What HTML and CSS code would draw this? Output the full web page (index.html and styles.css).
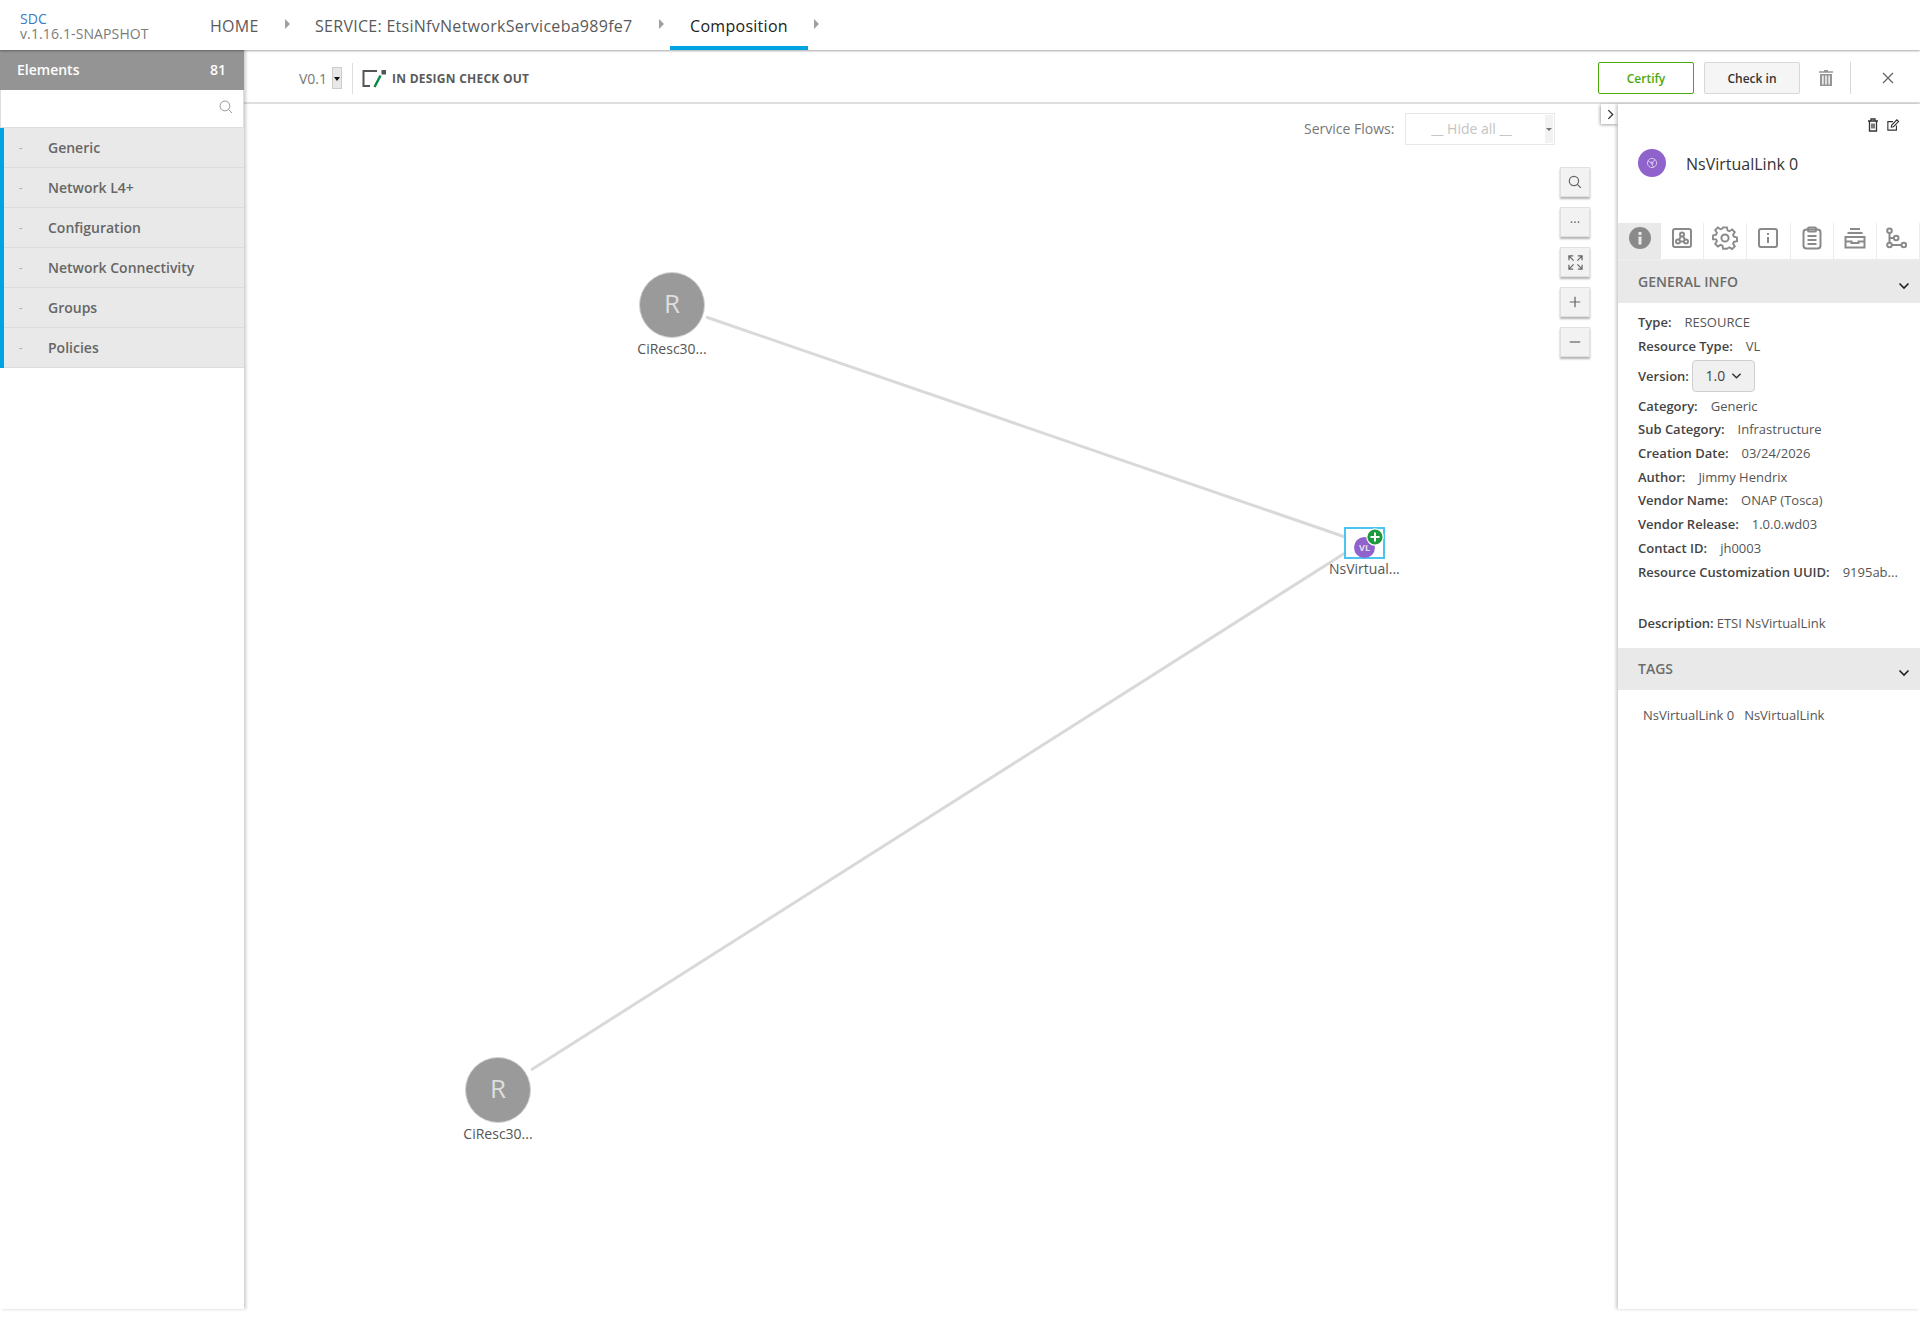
FILE: index.html
```html
<!DOCTYPE html>
<html lang="en">
<head>
<meta charset="utf-8">
<title>SDC Composition</title>
<link rel="stylesheet" href="styles.css">
</head>
<body>
<header class="topbar">
  <div class="brand">
    <div class="brand-name">SDC</div>
    <div class="brand-version">v.1.16.1-SNAPSHOT</div>
  </div>
  <nav class="crumbs">
    <a class="crumb crumb-home">HOME</a><i class="crumb-arrow"></i>
    <a class="crumb crumb-service">SERVICE: EtsiNfvNetworkServiceba989fe7</a><i class="crumb-arrow"></i>
    <a class="crumb crumb-active">Composition</a><i class="crumb-arrow"></i>
  </nav>
</header>
<main class="main">
  <aside class="palette">
    <div class="palette-head"><span>Elements</span><span>81</span></div>
    <div class="palette-search">
      <svg class="search-icon" viewBox="0 0 16 16"><circle cx="6.8" cy="6.8" r="5.6"/><path d="M10.8 10.8l4.2 4.2"/></svg>
    </div>
    <ul class="palette-list">
      <li><i>-</i>Generic</li>
      <li><i>-</i>Network L4+</li>
      <li><i>-</i>Configuration</li>
      <li><i>-</i>Network Connectivity</li>
      <li><i>-</i>Groups</li>
      <li><i>-</i>Policies</li>
    </ul>
  </aside>
  <section class="workspace">
    <div class="toolbar">
      <span class="ver">V0.1</span>
      <span class="ver-arrow"></span>
      <span class="tool-divider"></span>
      <svg class="state-icon" viewBox="0 0 24 17"><path class="state-box" d="M15 1H1.500v15H8"/><rect class="state-dot" x="19.500" y="0" width="4.500" height="4.500"/><path class="state-pen" d="M18.500 5.500L12.500 17"/></svg>
      <span class="state-text">IN DESIGN CHECK OUT</span>
      <span class="tool-fill"></span>
      <button class="btn btn-certify">Certify</button>
      <button class="btn btn-checkin">Check in</button>
      <svg class="tool-trash" viewBox="0 0 14 16"><path d="M5 0h4v1.200h5v1.600H0V1.200h5z"/><path d="M1 4h12v12H1zM3.200 5.500v9h1.400v-9zM6.300 5.500v9h1.400v-9zM9.400 5.500v9h1.400v-9z" fill-rule="evenodd"/></svg>
      <span class="tool-divider-2"></span>
      <svg class="tool-close" viewBox="0 0 12 12"><path d="M1 1l10 10M11 1L1 11"/></svg>
    </div>
    <div class="stage">
      <div class="canvas">
        <svg class="links" viewBox="0 1 1374 1205">
          <path d="M462 214L1101 434"/>
          <path d="M287 967L1101 450"/>
        </svg>
        <div class="node node-a"><div class="disc">R</div><div class="node-label">CiResc30...</div></div>
        <div class="node node-b"><div class="disc">R</div><div class="node-label">CiResc30...</div></div>
        <div class="vl">
          <div class="vl-box"><span class="vl-disc">VL</span></div>
          <svg class="vl-plus" viewBox="0 0 18 18"><circle cx="9" cy="9" r="8.200"/><path d="M9 4.500v9M4.500 9h9"/></svg>
          <div class="vl-label">NsVirtual...</div>
        </div>
        <div class="flows">
          <label class="flows-label">Service Flows:</label>
          <div class="flows-select"><span class="flows-value">__ Hide all __</span><span class="flows-arrow"></span></div>
        </div>
        <div class="zoomers">
          <div class="zoomer"><svg viewBox="0 0 16 16" class="z-line"><circle cx="6.800" cy="6.800" r="5.300"/><path d="M10.700 10.700l4 4"/></svg></div>
          <div class="zoomer"><svg viewBox="0 0 16 16" class="z-fill"><circle cx="4" cy="8" r="1"/><circle cx="8" cy="8" r="1"/><circle cx="12" cy="8" r="1"/></svg></div>
          <div class="zoomer"><svg viewBox="0 0 16 16" class="z-line z-large"><path d="M1 5.500V1h4.500M1 1l5 5M10.500 1H15v4.500M15 1l-5 5M1 10.500V15h4.500M1 15l5-5M15 10.500V15h-4.500M15 15l-5-5"/></svg></div>
          <div class="zoomer"><svg viewBox="0 0 16 16" class="z-line"><path d="M8 2v12M2 8h12"/></svg></div>
          <div class="zoomer"><svg viewBox="0 0 16 16" class="z-line"><path d="M2 8h12"/></svg></div>
        </div>
        <button class="collapse"><svg viewBox="0 0 8 12"><path d="M1.500 1l5 5-5 5"/></svg></button>
      </div>
      <aside class="panel">
        <div class="panel-actions">
          <svg viewBox="0 0 12 14"><path d="M1 3h10M4 3V1h4v2M2.500 3v10h7V3M5 5.500v5M7 5.500v5"/></svg>
          <svg viewBox="0 0 14 14"><path d="M11 7.500V13H1V3h6M5 9.500l.5-2.500L11.500 1l2 2-6 6z"/></svg>
        </div>
        <div class="panel-title">
          <span class="title-disc"><svg viewBox="0 0 12 12"><circle cx="6" cy="6" r="4.600"/><circle cx="6" cy="6" r="1"/><path d="M2 4l3.500 1.800M9 2.500L6.500 5.500M6 7l1.500 3.500"/></svg></span>
          <span class="title-text">NsVirtualLink 0</span>
        </div>
        <div class="tabs">
          <div class="tab tab-active"><svg viewBox="0 0 24 24"><circle class="fill" cx="12" cy="12" r="11"/><rect class="cut" x="10.500" y="6" width="3" height="3"/><rect class="cut" x="10.500" y="10.500" width="3" height="8"/></svg></div>
          <div class="tab"><svg viewBox="0 0 24 24"><rect x="3" y="3" width="18" height="18" rx="2"/><circle cx="12" cy="8.500" r="2"/><circle cx="8" cy="15.500" r="2"/><circle cx="16" cy="15.500" r="2"/><path d="M11 10.300l-2 3.400M13 10.300l2 3.400M10 15.500h4"/></svg></div>
          <div class="tab"><svg viewBox="0 0 24 24"><circle cx="12" cy="12" r="3.600"/><path d="M10 1h4l.7 3.200 2 .9 2.800-1.800 2.800 2.800-1.800 2.800.9 2 3.200.7v4l-3.200.7-.9 2 1.800 2.800-2.800 2.800-2.800-1.800-2 .9L14 23.500h-4l-.7-3.200-2-.9-2.800 1.800-2.800-2.800 1.800-2.800-.9-2L-.6 13.500v-4l3.200-.7.900-2-1.800-2.800 2.800-2.800 2.800 1.800 2-.9z" transform="translate(.6 .4) scale(.95)"/></svg></div>
          <div class="tab"><svg viewBox="0 0 24 24"><rect x="3" y="3" width="18" height="18" rx="2"/><path d="M12 7v2M12 11v6"/></svg></div>
          <div class="tab"><svg viewBox="0 0 24 24"><rect x="3.500" y="3.500" width="17" height="19" rx="3"/><rect x="8" y="1.500" width="8" height="4" rx="1"/><path d="M7.500 10h9M7.500 14h9M7.500 18h9"/></svg></div>
          <div class="tab"><svg viewBox="0 0 24 24"><path d="M7 3h10M4.500 7h15M2.500 11h19v10.500h-19zM2.500 15.500h6v1.500h7v-1.500h6"/></svg></div>
          <div class="tab"><svg viewBox="0 0 24 24"><circle cx="3.500" cy="4.800" r="2.300"/><circle cx="3.500" cy="19" r="2.300"/><circle cx="10.200" cy="12" r="2.300"/><circle cx="17.800" cy="19" r="2.300"/><path d="M3.500 7.100v9.600M3.500 12h4.400M5.800 19h9.700"/></svg></div>
        </div>
        <div class="sect-head sect-general"><span>GENERAL INFO</span><svg viewBox="0 0 12 8"><path d="M1.500 1.500L6 6l4.500-4.500"/></svg></div>
        <div class="info">
          <div class="row r-type"><b>Type:</b><span>RESOURCE</span></div>
          <div class="row r-rtype"><b>Resource Type:</b><span>VL</span></div>
          <div class="row r-version"><b>Version:</b><button class="version-btn">1.0<svg viewBox="0 0 12 8"><path d="M1.500 1.500L6 6l4.500-4.500"/></svg></button></div>
          <div class="row r-cat"><b>Category:</b><span>Generic</span></div>
          <div class="row r-sub"><b>Sub Category:</b><span>Infrastructure</span></div>
          <div class="row r-date"><b>Creation Date:</b><span>03/24/2026</span></div>
          <div class="row r-author"><b>Author:</b><span>Jimmy Hendrix</span></div>
          <div class="row r-vname"><b>Vendor Name:</b><span>ONAP (Tosca)</span></div>
          <div class="row r-vrel"><b>Vendor Release:</b><span>1.0.0.wd03</span></div>
          <div class="row r-contact"><b>Contact ID:</b><span>jh0003</span></div>
          <div class="row r-uuid"><b>Resource Customization UUID:</b><span>9195ab...</span></div>
          <div class="row r-desc"><b>Description:</b><span class="desc">ETSI NsVirtualLink</span></div>
        </div>
        <div class="sect-head sect-tags"><span>TAGS</span><svg viewBox="0 0 12 8"><path d="M1.500 1.500L6 6l4.500-4.500"/></svg></div>
        <div class="tag-row"><span>NsVirtualLink 0</span><span>NsVirtualLink</span></div>
      </aside>
    </div>
  </section>
</main>
</body>
</html>
```
FILE: styles.css
```css
* { box-sizing: border-box; }
html, body { margin: 0; padding: 0; height: 1319px; background: #fff; overflow: hidden; }
body { font-family: "Open Sans", "Noto Sans", sans-serif; color: #5a5a5a; }
svg { display: block; overflow: visible; }
button { font-family: inherit; cursor: pointer; }

/* top bar */
.topbar { height: 50px; display: flex; background: #fff; position: relative; z-index: 3; box-shadow: 0 1px 2px rgba(0,0,0,.35); }
.brand { width: 210px; padding: 11px 0 0 20px; font-size: 14px; line-height: 15px; letter-spacing: .12px; }
.brand-name { color: #3a7cbf; }
.brand-version { color: #7b7b7b; }
.crumbs { display: flex; align-items: stretch; font-size: 16px; letter-spacing: .28px; }
.crumb { display: flex; align-items: center; padding-top: 2px; color: #5a5a5a; }
.crumb-home { width: 75px; }
.crumb-service { width: 344px; white-space: nowrap; }
.crumb-arrow { width: 0; height: 0; margin-top: 19px; border-left: 5px solid #a0a0a0; border-top: 5px solid transparent; border-bottom: 5px solid transparent; }
.crumb-home + .crumb-arrow { margin-right: 25px; }
.crumb-service + .crumb-arrow { margin-right: 6px; }
.crumb-active { width: 138px; justify-content: center; color: #222; border-bottom: 4px solid #00a4e0; padding-top: 6px; margin-right: 6px; }

/* layout */
.main { display: flex; height: 1259px; }
.palette { width: 244px; flex: none; position: relative; z-index: 2; background: #fff; box-shadow: 2px 0 3px rgba(0,0,0,.2); }
.workspace { flex: 1; display: flex; flex-direction: column; min-width: 0; }

/* palette */
.palette-head { height: 40px; background: #949494; color: #fff; display: flex; justify-content: space-between; align-items: center; padding: 0 18px 2px 17px; font-size: 14px; font-weight: 600; }
.palette-search { height: 38px; background: #fff; border: 1px solid #dedede; border-top: 0; display: flex; justify-content: flex-end; align-items: center; padding: 0 10px 4px 0; }
.search-icon { width: 14px; height: 14px; fill: none; stroke: #8b8b8b; stroke-width: 1; }
.palette-list { list-style: none; margin: 0; padding: 0; border-left: 4px solid #00a4e0; }
.palette-list li { height: 40px; background: #e9e9e9; border-bottom: 1px solid #dcdcdc; display: flex; align-items: center; font-size: 14px; font-weight: 600; color: #666; padding-bottom: 1px; }
.palette-list i { width: 44px; padding-left: 15px; font-style: normal; font-size: 10px; font-weight: 400; color: #999; }

/* toolbar */
.toolbar { height: 54px; flex: none; border-bottom: 2px solid #dedede; display: flex; align-items: center; padding: 4px 0 0 55px; background: #fff; }
.ver { font-size: 14px; color: #777; margin-right: 5px; }
.ver-arrow { width: 10px; height: 22px; margin-right: 10px; background: #e8e8e8; border: 1px solid #ccc; position: relative; }
.ver-arrow::after { content: ""; position: absolute; left: 1px; top: 9px; border-left: 3px solid transparent; border-right: 3px solid transparent; border-top: 4px solid #111; }
.tool-divider { width: 1px; height: 31px; background: #dedede; margin-right: 9px; }
.state-icon { width: 24px; height: 17px; margin-right: 6px; }
.state-box { fill: none; stroke: #555; stroke-width: 2; }
.state-dot { fill: #555; }
.state-pen { fill: none; stroke: #0a8a45; stroke-width: 2.500; }
.state-text { font-size: 12px; font-weight: 700; color: #5a5a5a; letter-spacing: .25px; }
.tool-fill { flex: 1; }
.btn { width: 96px; height: 32px; border-radius: 2px; font-size: 12px; font-weight: 600; padding: 0; }
.btn-certify { background: #fff; border: 1px solid #4ca90c; color: #4ca90c; margin-right: 10px; }
.btn-checkin { background: #f5f5f5; border: 1px solid #d8d8d8; color: #333; margin-right: 19px; }
.tool-trash { width: 14px; height: 16px; fill: #959595; margin-right: 17px; }
.tool-divider-2 { width: 1px; height: 32px; background: #d8d8d8; margin-right: 31px; }
.tool-close { width: 12px; height: 12px; margin-right: 26px; fill: none; stroke: #666; stroke-width: 1.300; }

/* canvas */
.stage { flex: 1; display: flex; min-height: 0; }
.canvas { width: 1374px; flex: none; position: relative; background: #fff; }
.links { position: absolute; left: 0; top: 0; width: 1374px; height: 1205px; fill: none; stroke: #d9d9d9; stroke-width: 3; }
.node { position: absolute; width: 80px; display: flex; flex-direction: column; align-items: center; }
.node-a { left: 388px; top: 168px; }
.node-b { left: 214px; top: 953px; }
.disc { width: 66px; height: 66px; border-radius: 50%; background: #9a9a9a; border: 1px solid #d4d4d4; color: #dedede; font-size: 26px; line-height: 61px; text-align: center; }
.node-label { font-size: 14px; line-height: 19px; margin-top: 1px; color: #555; white-space: nowrap; }
.vl { position: absolute; left: 1100px; top: 423px; width: 41px; height: 31px; }
.vl-box { width: 41px; height: 32px; border: 2px solid #4bc4f2; display: flex; align-items: flex-end; justify-content: center; }
.vl-disc { width: 21px; height: 21px; border-radius: 50%; background: #8f62cc; color: #e6dcf3; font-size: 9px; font-weight: 700; line-height: 21px; text-align: center; margin-bottom: -1px; }
.vl-plus { position: absolute; left: 22px; top: 1px; width: 18px; height: 18px; fill: #1d9a3c; stroke: #fff; stroke-width: 1.200; }
.vl-plus path { stroke-width: 2; fill: none; }
.vl-label { position: absolute; left: -15px; top: 32px; font-size: 14px; line-height: 19px; color: #555; white-space: nowrap; }
.flows { position: absolute; left: 1060px; top: 9px; display: flex; align-items: center; }
.flows-label { font-size: 14px; color: #777; width: 101px; padding-bottom: 2px; }
.flows-select { width: 150px; height: 32px; border: 1px solid #e8e8e8; position: relative; display: flex; align-items: center; padding: 0 17px 2px 0; justify-content: center; }
.flows-value { font-size: 14px; color: #c4c4c4; }
.flows-arrow { position: absolute; right: 1px; top: 1px; bottom: 1px; width: 8px; background: #f2f2f2; }
.flows-arrow::after { content: ""; position: absolute; left: 1px; top: 13px; border-left: 3px solid transparent; border-right: 3px solid transparent; border-top: 3px solid #777; }
.zoomers { position: absolute; left: 1316px; top: 63px; display: flex; flex-direction: column; gap: 10px; }
.zoomer { width: 30px; height: 30px; background: #f2f2f2; border: 1px solid #e0e0e0; box-shadow: 0 2px 2px rgba(0,0,0,.3); display: flex; align-items: center; justify-content: center; }
.zoomer svg { width: 14px; height: 14px; }
.z-line { fill: none; stroke: #666; stroke-width: 1.400; }
.z-fill { fill: #666; }
.zoomer .z-large { width: 15px; height: 15px; stroke-width: 1.300; }
.collapse { position: absolute; right: 0; top: 0; width: 17px; height: 20px; padding: 0 0 0 6px; background: #fff; border: 0; box-shadow: -1px 1px 3px rgba(0,0,0,.35); }
.collapse svg { width: 7px; height: 11px; fill: none; stroke: #333; stroke-width: 1.500; }

/* panel */
.panel { width: 302px; flex: none; position: relative; background: #fff; box-shadow: -2px 0 3px rgba(0,0,0,.2); z-index: 1; }
.panel-actions { height: 45px; padding: 14px 21px 0 0; display: flex; justify-content: flex-end; gap: 8px; }
.panel-actions svg { width: 12px; height: 14px; fill: none; stroke: #333; stroke-width: 1.300; }
.panel-title { height: 74px; display: flex; align-items: flex-start; padding-left: 20px; }
.title-disc { width: 28px; height: 28px; border-radius: 50%; background: #8f62cc; display: flex; align-items: center; justify-content: center; }
.title-disc svg { width: 12px; height: 12px; fill: none; stroke: #e6dcf3; stroke-width: .8; }
.title-text { font-size: 16px; line-height: 30px; color: #333; margin-left: 20px; }
.tabs { height: 38px; display: flex; border-bottom: 2px solid #ececec; }
.tab { width: 43.300px; border-right: 1px solid #ececec; display: flex; align-items: flex-start; justify-content: center; padding-top: 3px; }
.tab svg { width: 24px; height: 24px; fill: none; stroke: #8a8a8a; stroke-width: 2; }
.tab-active { background: #e9e9e9; border-right: 0; }
.tab-active .fill { fill: #8a8a8a; stroke: none; }
.tab-active .cut { fill: #e9e9e9; stroke: none; }
.sect-head { height: 42px; background: #e9e9e9; display: flex; align-items: center; justify-content: space-between; padding: 0 10px 0 20px; font-size: 14px; font-weight: 600; color: #6d6d6d; }
.sect-head span { padding-bottom: 1px; }
.sect-head svg { width: 12px; height: 8px; fill: none; stroke: #222; stroke-width: 1.600; margin-top: 8px; }
.info { padding: 7.500px 0 0 20px; height: 345px; font-size: 13px; color: #555; }
.row { display: flex; align-items: center; white-space: nowrap; height: 23.700px; }
.row b { font-weight: 600; color: #444; margin-right: 13px; }
.r-version { height: 36px; }
.r-version b { margin-right: 3px; }
.r-desc { margin-top: 27.300px; }
.r-desc b { margin-right: 3px; }
.version-btn { width: 63px; height: 32px; background: #f0f0f0; border: 1px solid #cfcfcf; border-radius: 4px; font-size: 14px; color: #444; display: flex; align-items: center; justify-content: center; gap: 6px; padding: 0 0 0 1px; }
.version-btn svg { width: 11px; height: 8px; fill: none; stroke: #333; stroke-width: 1.600; }
.tag-row { padding: 16px 0 0 25px; display: flex; gap: 10px; font-size: 13px; line-height: 18px; color: #555; }
```
